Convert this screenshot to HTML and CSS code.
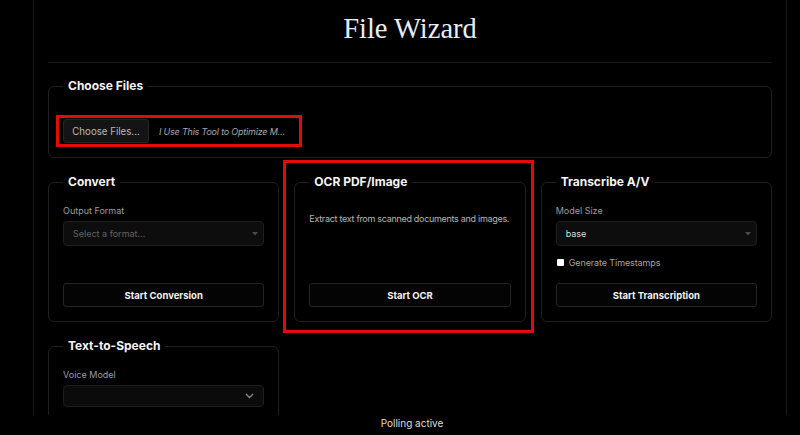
FILE: index.html
```html
<!DOCTYPE html>
<html lang="en">
<head>
<meta charset="utf-8">
<title>File Wizard</title>
<link rel="stylesheet" href="styles.css">
</head>
<body>
<div class="page">
  <header class="header">
    <h1 class="title">File Wizard</h1>
  </header>

  <fieldset class="card card-files">
    <legend class="legend">Choose Files</legend>
    <div class="file-row">
      <button class="file-btn" type="button">Choose Files...</button>
      <span class="file-name">I Use This Tool to Optimize M...</span>
    </div>
  </fieldset>

  <div class="grid">
    <fieldset class="card">
      <legend class="legend">Convert</legend>
      <label class="label">Output Format</label>
      <div class="select-wrap">
        <select class="select select-placeholder"><option>Select a format...</option></select>
        <svg class="caret" width="6" height="4" viewBox="0 0 6 4"><path d="M0 0H6L3 3.5Z" fill="#4a4a4a"/></svg>
      </div>
      <button class="action" type="button">Start Conversion</button>
    </fieldset>

    <div class="highlight">
      <fieldset class="card">
        <legend class="legend">OCR PDF/Image</legend>
        <p class="desc">Extract text from scanned documents and images.</p>
        <button class="action" type="button">Start OCR</button>
      </fieldset>
    </div>

    <fieldset class="card">
      <legend class="legend">Transcribe A/V</legend>
      <label class="label">Model Size</label>
      <div class="select-wrap">
        <select class="select"><option>base</option></select>
        <svg class="caret" width="6" height="4" viewBox="0 0 6 4"><path d="M0 0H6L3 3.5Z" fill="#4a4a4a"/></svg>
      </div>
      <label class="check-row"><input class="check" type="checkbox"><span>Generate Timestamps</span></label>
      <button class="action" type="button">Start Transcription</button>
    </fieldset>

    <fieldset class="card">
      <legend class="legend">Text-to-Speech</legend>
      <label class="label">Voice Model</label>
      <div class="select-wrap">
        <select class="select select-tts"><option></option></select>
        <svg class="chevron" width="9" height="6" viewBox="0 0 9 6"><path d="M1 1L4.5 4.5L8 1" fill="none" stroke="#8a8a8a" stroke-width="1.3"/></svg>
      </div>
    </fieldset>
  </div>
</div>
<footer class="status">Polling active</footer>
</body>
</html>
```

FILE: styles.css
```css
* { box-sizing: border-box; }

html, body {
  margin: 0;
  background: #000;
  color: #e6e6e6;
  font-family: Inter, "Noto Sans", sans-serif;
}

.page {
  margin-left: 33px;
  width: 754px;
  min-height: 100vh;
  padding: 0 14px;
  border-left: 1px solid #181818;
  border-right: 1px solid #181818;
}

.header {
  padding: 12px 0 16px;
  border-bottom: 1px solid #191919;
}

.title {
  margin: 0;
  text-align: center;
  font-family: "Liberation Serif", serif;
  font-weight: normal;
  font-size: 28.5px;
  line-height: 34px;
  color: #e8ecf4;
}

.card {
  margin: 0;
  min-width: 0;
  border: 1px solid #1f1f1f;
  border-radius: 6px;
  padding: 14px 14px 14px;
  display: flex;
  flex-direction: column;
}

.legend {
  padding: 0 5px;
  font-size: 12px;
  line-height: 16px;
  font-weight: 700;
  color: #f4f4f4;
}

.card-files {
  margin-top: 15px;
  padding: 21px 14px 10px;
  display: block;
}

.file-row {
  display: flex;
  align-items: center;
  width: 246px;
  margin-left: -7px;
  padding: 1px 4px;
  border: 3px solid #e00c0c;
}

.file-btn {
  width: 86px;
  height: 24px;
  padding: 0;
  background: #141414;
  border: 1px solid #242424;
  border-radius: 3px;
  color: #b8b8b8;
  font-family: inherit;
  font-size: 9.7px;
}

.file-name {
  margin-left: 10px;
  font-size: 9px;
  letter-spacing: -0.2px;
  font-style: italic;
  color: #a8a8a8;
  white-space: nowrap;
}

.grid {
  margin-top: 16px;
  display: grid;
  grid-template-columns: repeat(3, 1fr);
  column-gap: 15px;
  row-gap: 16px;
}

.label {
  display: block;
  font-size: 9px;
  line-height: 13px;
  color: #9a9ea4;
}

.select-wrap {
  position: relative;
  margin-top: 4px;
}

.select {
  display: block;
  width: 100%;
  height: 25px;
  margin: 0;
  padding: 0 9px;
  appearance: none;
  -webkit-appearance: none;
  background: #0d0d0d;
  border: 1px solid #1e1e1e;
  border-radius: 4px;
  color: #dcdcdc;
  font-family: inherit;
  font-size: 9px;
  outline: none;
}

.select-placeholder { color: #626262; }
.select-tts { height: 22px; background: #0b0b0b; }

.caret {
  position: absolute;
  right: 6px;
  top: 11px;
}

.chevron {
  position: absolute;
  right: 10px;
  top: 8px;
}

.desc {
  margin: 8px 0 0;
  font-size: 9px;
  letter-spacing: -0.3px;
  line-height: 13px;
  white-space: nowrap;
  color: #b4b4b4;
}

.check-row {
  display: flex;
  align-items: center;
  height: 14px;
  margin-top: 9px;
  font-size: 9px;
  letter-spacing: -0.1px;
  color: #a4a4a4;
}

.check {
  appearance: none;
  -webkit-appearance: none;
  width: 7px;
  height: 7px;
  margin: 0 5px 0 1px;
  background: #fff;
  border-radius: 1px;
}

.action {
  margin-top: auto;
  height: 24px;
  width: 100%;
  background: #040404;
  border: 1px solid #242424;
  border-radius: 3px;
  color: #f2f2f2;
  font-family: inherit;
  font-size: 9.5px;
  font-weight: 700;
}

.check-row + .action { margin-top: 14px; }

.highlight {
  position: relative;
  display: flex;
  flex-direction: column;
}

.highlight > .card { flex: 1; }

.highlight::after {
  content: "";
  position: absolute;
  top: -14px;
  left: -11px;
  right: -8px;
  bottom: -11px;
  border: 3px solid #e00c0c;
  pointer-events: none;
}

.status {
  position: fixed;
  left: 0;
  right: 0;
  bottom: 0;
  height: 20px;
  padding: 0 0 4px 24px;
  background: #000;
  text-align: center;
  font-size: 10px;
  line-height: 16px;
  color: #dedede;
}
```
